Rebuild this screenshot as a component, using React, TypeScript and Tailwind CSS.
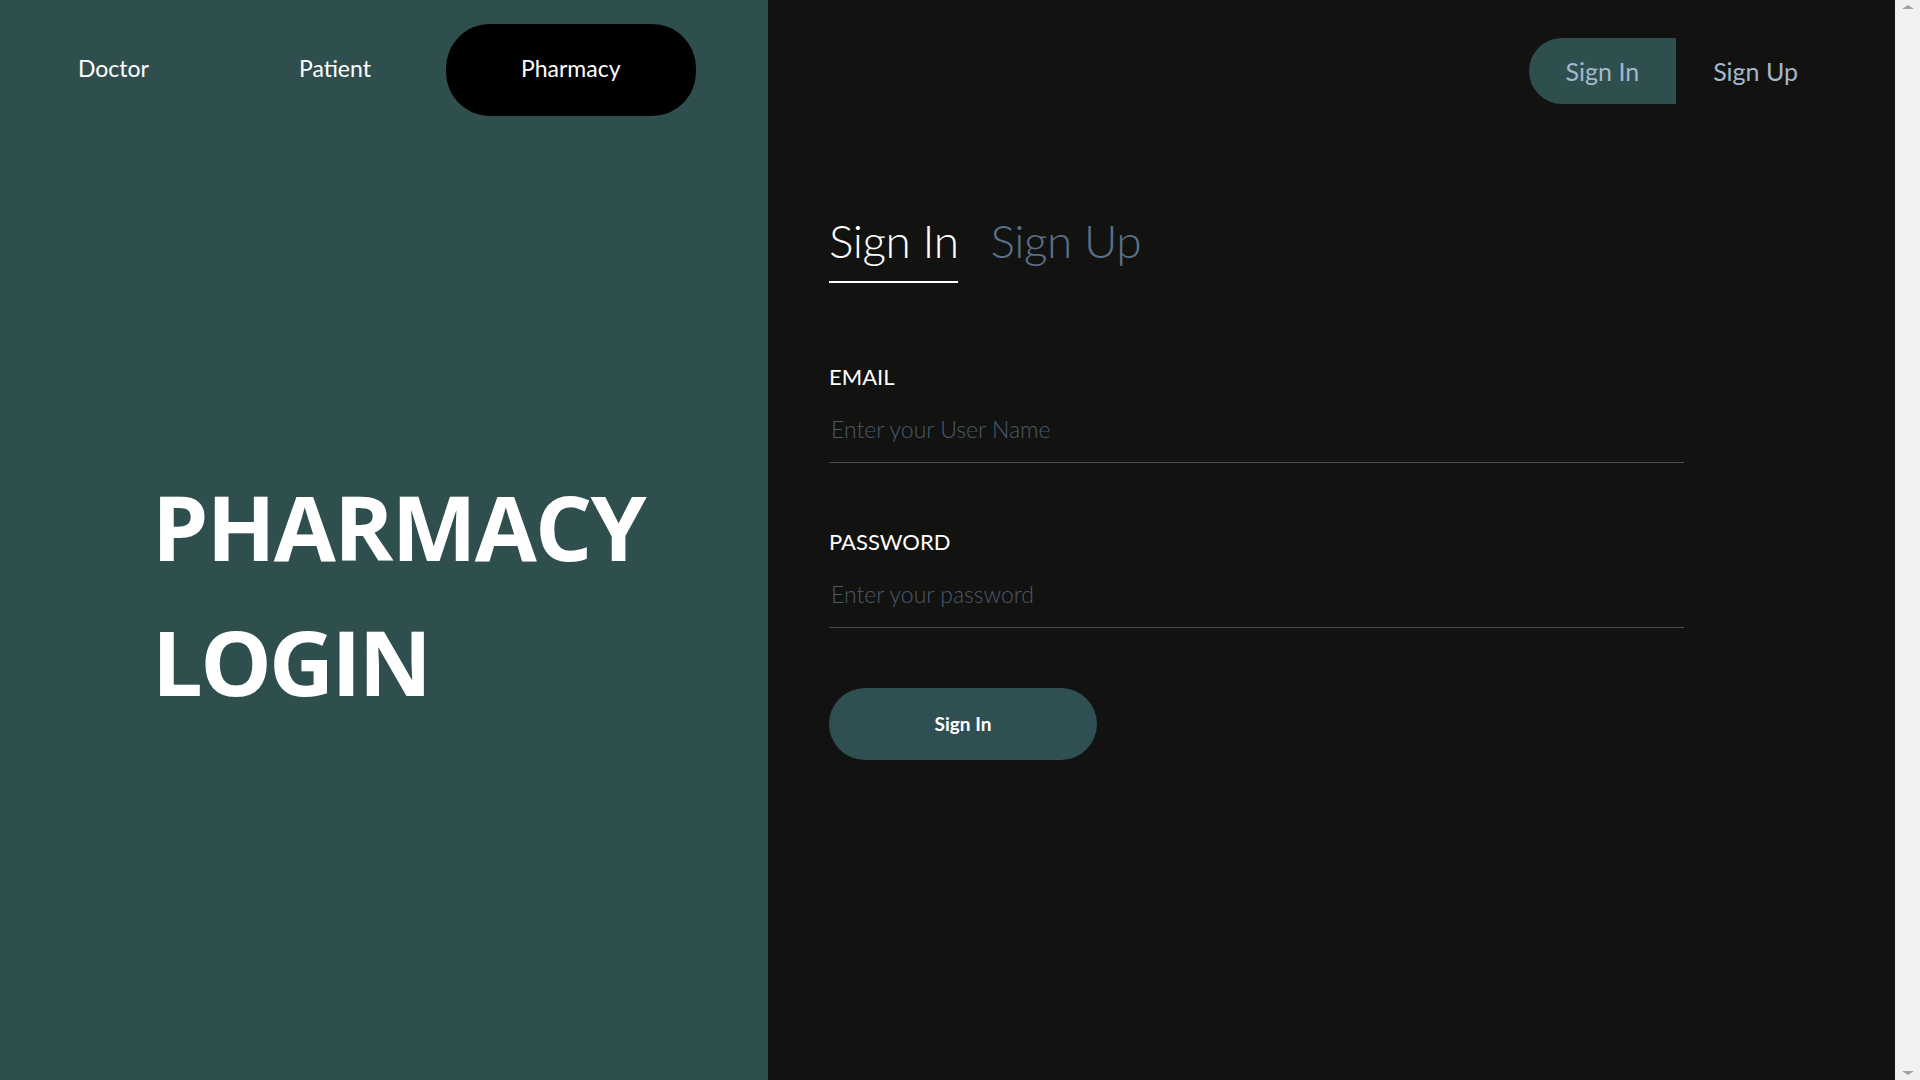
import React from "react";

export default function App() {
  return (
    <div className="flex h-[1080px] w-[1920px] overflow-hidden" style={{ fontFamily: "Lato, 'Open Sans', sans-serif" }}>
      {/* Left panel */}
      <div className="flex w-[768px] shrink-0 flex-col bg-[#2f4f4f]">
        <nav className="flex pl-[3px] pt-[24px]">
          <a className="flex h-[92px] items-center rounded-[44px] px-[75px] pb-[4px] text-[23px] text-white">Doctor</a>
          <a className="flex h-[92px] items-center rounded-[44px] px-[75px] pb-[4px] text-[23px] text-white">Patient</a>
          <a className="flex h-[92px] items-center rounded-[44px] bg-black px-[75px] pb-[4px] text-[23px] text-white">Pharmacy</a>
        </nav>
        <h1
          className="ml-[152px] mt-[343px] text-[90px] font-bold leading-[135px] tracking-[-0.02em] text-white"
          style={{ fontFamily: "'Open Sans', sans-serif" }}
        >
          PHARMACY
          <br />
          <span className="tracking-[-0.03em]">LOGIN</span>
        </h1>
      </div>

      {/* Right panel */}
      <div className="flex flex-1 flex-col bg-[#121310]">
        <div className="flex justify-end pr-[60px] pt-[38px]">
          <button className="flex h-[66px] items-center rounded-l-full bg-[#2f4f4f] px-[37px] pt-[2px] text-[25px] text-[#a3b8cc]">
            Sign In
          </button>
          <button className="flex h-[66px] items-center px-[37px] pt-[2px] text-[25px] text-[#a3b8cc]">Sign Up</button>
        </div>

        <div className="ml-[61px] mt-[114px] flex w-[855px] flex-col">
          <div className="flex gap-[32px]">
            <div className="border-b-2 border-white pb-[17px] text-[46px] font-light leading-none tracking-[-0.01em] text-white">
              Sign In
            </div>
            <div className="text-[46px] font-light leading-none tracking-[-0.01em] text-[#5b6f8a]">Sign Up</div>
          </div>

          <label className="mt-[80px] text-[22px] leading-[28px] text-white">EMAIL</label>
          <input
            className="mt-[4px] h-[68px] border-b border-[#474d55] bg-transparent pl-[2px] text-[23px] font-light text-white outline-none placeholder:text-[#4a5a6e]"
            placeholder="Enter your User Name"
          />

          <label className="mt-[65px] text-[22px] leading-[28px] text-white">PASSWORD</label>
          <input
            type="password"
            className="mt-[4px] h-[68px] border-b border-[#474d55] bg-transparent pl-[2px] text-[23px] font-light text-white outline-none placeholder:text-[#4a5a6e]"
            placeholder="Enter your password"
          />

          <button className="mt-[60px] flex h-[72px] w-[268px] items-center justify-center rounded-full bg-[#2f4f52] text-[19px] font-bold text-white">
            Sign In
          </button>
        </div>
      </div>

      {/* Scrollbar */}
      <div className="flex w-[25px] shrink-0 flex-col items-center justify-between bg-[#f1f1f1] py-[5px]">
        <div className="h-0 w-0 border-x-[6px] border-b-[4px] border-x-transparent border-b-[#a3a3a3]" />
        <div className="h-0 w-0 border-x-[6px] border-t-[4px] border-x-transparent border-t-[#a3a3a3]" />
      </div>
    </div>
  );
}
